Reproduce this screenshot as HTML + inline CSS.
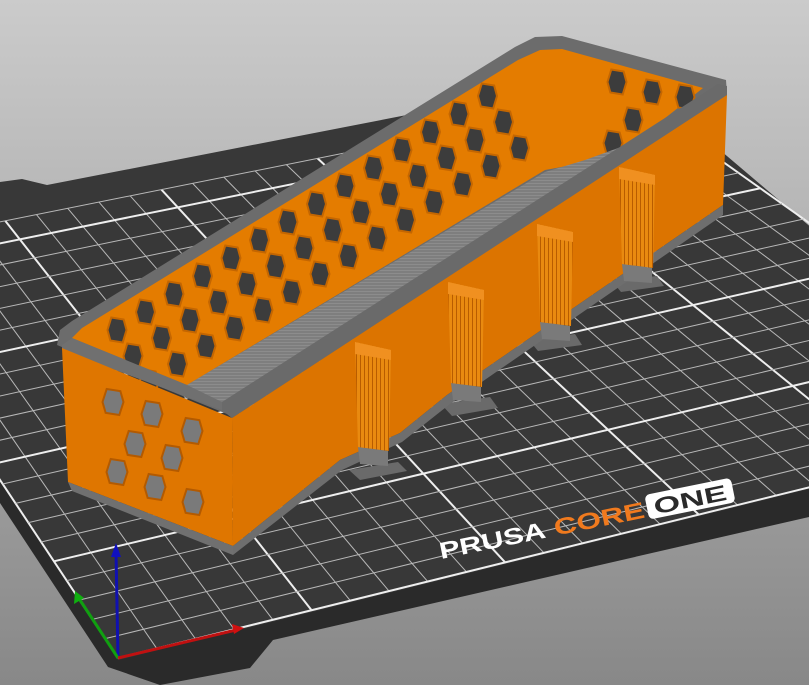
<!DOCTYPE html>
<html><head><meta charset="utf-8"><style>
html,body{margin:0;padding:0;width:809px;height:685px;overflow:hidden;background:#aaa}
svg{display:block}
</style></head><body>
<svg id="s" width="809" height="685" viewBox="0 0 809 685" xmlns="http://www.w3.org/2000/svg">
<defs>
<linearGradient id="bg" x1="0" y1="0" x2="0" y2="1">
<stop offset="0" stop-color="#cbcbcb"/><stop offset="1" stop-color="#888888"/>
</linearGradient>
<pattern id="stripe" width="3" height="3" patternUnits="userSpaceOnUse">
<rect width="3" height="3" fill="#7e7e7e"/><rect width="3" height="1" fill="#8c8c8c"/>
</pattern>
<pattern id="pil" width="4" height="6" patternUnits="userSpaceOnUse">
<rect width="4" height="6" fill="#e98a10"/><rect width="1" height="6" fill="#b85c00"/>
</pattern>
</defs>
<rect width="809" height="685" fill="url(#bg)"/>
<polygon points="0,478 118,658 809,487 809,517 273,640 250,668 160,685 108,667 0,503" fill="#2a2a2a"/>
<polygon points="0,182 22,179 47,185 628,72 820,235 809,489 118,660 0,480" fill="#383838"/>
<g id="grid"></g>
<g transform="translate(441,559) rotate(-11.5)">
<text x="0" y="0" font-family="Liberation Sans, sans-serif" font-weight="bold" font-size="23" fill="#fff" textLength="108" lengthAdjust="spacingAndGlyphs">PRUSA</text>
<text x="117" y="0" font-family="Liberation Sans, sans-serif" font-weight="bold" font-size="23" fill="#f07a1e" textLength="92" lengthAdjust="spacingAndGlyphs">CORE</text>
<rect x="212" y="-22" width="88" height="25" rx="5" fill="#fff"/>
<text x="219" y="-1" font-family="Liberation Sans, sans-serif" font-weight="bold" font-size="22" fill="#2a2a2a" textLength="74" lengthAdjust="spacingAndGlyphs">ONE</text>
</g>
<g stroke-width="3" fill="none">
<line x1="118" y1="658" x2="116" y2="552" stroke="#1010b0"/>
<line x1="118" y1="658" x2="78" y2="597" stroke="#10a010"/>
<line x1="118" y1="658" x2="236" y2="630" stroke="#c01010"/>
</g>
<polygon points="116,543 111,557 121,557" fill="#1010c0"/>
<polygon points="75,591 74,604 84,598" fill="#10b010"/>
<polygon points="244,628 232,624 234,634" fill="#d01010"/>
<g fill="#6a6a6a">
<polygon points="349,470 398,462 407,471 360,480"/>
<polygon points="441,404 490,397 498,408 452,416"/>
<polygon points="529,340 575,334 582,345 538,351"/>
<polygon points="612,281 657,276 664,286 621,292"/>
</g>
<polygon points="57,345 60,330 72,321 515,47 535,37 562,36 726,80 727,95 232,418 227,414" fill="#6c6c6c"/>
<polygon points="72,338 82,328 518,60 540,50 562,49 703,88 640,138 600,160 545,170 187,385" fill="#e47c00"/>
<g id="holesIn"></g>
<polygon points="187,385 545,172 585,160 640,140 710,90 724,93 230,410 218,404" fill="url(#stripe)"/>
<polygon points="222,402 718,84 727,86 727,96 232,418 222,410" fill="#6a6a6a"/>
<polygon points="62,345 72,338 187,385 222,402 222,410 62,350" fill="#707070"/>
<polygon points="62,348 232,418 233,546 68,482" fill="#df7600"/>
<g id="holesL"></g>
<polygon points="232,418 727,95 723,205 447,395 400,433 340,460 233,546" fill="#dc7400"/>
<polygon points="68,482 233,546 233,555 72,491" fill="#707070"/>
<polygon points="233,546 340,460 400,433 447,395 723,205 723,215 450,404 402,442 342,470 233,555" fill="#6e6e6e"/>
<g id="pillars"></g>
</svg>
<script>
(function(){
var NS="http://www.w3.org/2000/svg";
function el(p,t,a){var e=document.createElementNS(NS,t);for(var k in a)e.setAttribute(k,a[k]);p.appendChild(e);return e;}
var FL=[118,658],FR=[1086,419],BL=[-151,252],BR=[630,96];
function P(s,t){return [FL[0]+s*(FR[0]-FL[0])+t*(BL[0]-FL[0])+s*t*(FL[0]-FR[0]-BL[0]+BR[0]),
FL[1]+s*(FR[1]-FL[1])+t*(BL[1]-FL[1])+s*t*(FL[1]-FR[1]-BL[1]+BR[1])];}
var g=document.getElementById("grid");
for(var i=0;i<=25;i++){var a=P(i/25,0),b=P(i/25,1),th=i%5==0;
el(g,"line",{x1:a[0],y1:a[1],x2:b[0],y2:b[1],stroke:th?"#eee":"#b8b8b8","stroke-width":th?2:1});}
for(var j=0;j<=21;j++){var a=P(0,j/21),b=P(1,j/21),th=j%5==0;
el(g,"line",{x1:a[0],y1:a[1],x2:b[0],y2:b[1],stroke:th?"#eee":"#b8b8b8","stroke-width":th?2:1});}
function hex(p,cx,cy,w,h,fill,edge){
var pts=[[-w*0.3,-h*0.5],[w*0.35,-h*0.42],[w*0.5,0],[w*0.3,h*0.5],[-w*0.35,h*0.42],[-w*0.5,0]];
el(p,"polygon",{points:pts.map(function(q){return (cx+q[0])+","+(cy+q[1]);}).join(" "),fill:fill,stroke:edge,"stroke-width":2});}
var hi=document.getElementById("holesIn");
var r1=[117,330];
for(var r=0;r<3;r++){for(var k=0;k<14;k++){var cx=r1[0]+r*16+k*28.5,cy=r1[1]+r*26-k*18;
hex(hi,cx,cy,19,25,"#3c3c3c","#c46600");}}
[[617,82],[652,92],[685,97],[633,120],[613,143]].forEach(function(c){hex(hi,c[0],c[1],19,25,"#3c3c3c","#c46600");});
var hl=document.getElementById("holesL");
[[113,402],[152,414],[192,431],[135,444],[172,458],[117,472],[155,487],[193,502]].forEach(function(c){hex(hl,c[0],c[1],21,26,"#7a7a7a","#b35a00");});
var pg=document.getElementById("pillars");
[[355,342,463],[448,282,399],[537,224,338],[619,167,280]].forEach(function(p){
var x=p[0],y=p[1],yb=p[2];
el(pg,"polygon",{points:(x+3)+","+(yb-16)+" "+(x+33)+","+(yb-12)+" "+(x+33)+","+(yb+3)+" "+(x+5)+","+(yb+1),fill:"#7a7a7a"});
el(pg,"polygon",{points:x+","+y+" "+(x+36)+","+(y+8)+" "+(x+34)+","+(yb-12)+" "+(x+3)+","+(yb-16),fill:"url(#pil)"});
el(pg,"polygon",{points:x+","+y+" "+(x+36)+","+(y+8)+" "+(x+36)+","+(y+18)+" "+x+","+(y+12),fill:"#f09020"});
});
})();
</script>
</body></html>
